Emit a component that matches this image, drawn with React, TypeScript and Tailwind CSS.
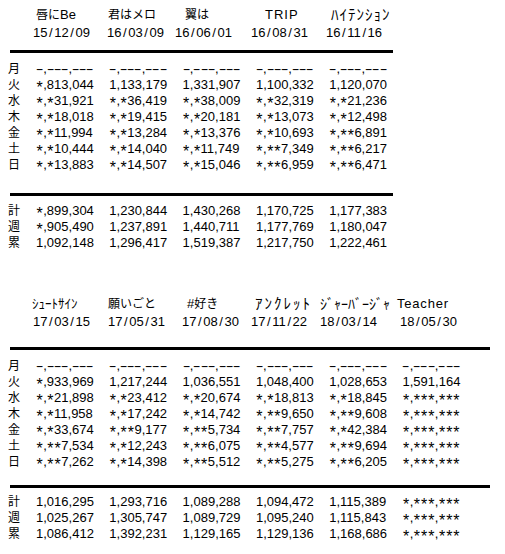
import React from 'react';

type Row = [string, string[]];

const rows1: Row[] = [
  ['月', ['-,---,---', '-,---,---', '-,---,---', '-,---,---', '-,---,---']],
  ['火', ['*,813,044', '1,133,179', '1,331,907', '1,100,332', '1,120,070']],
  ['水', ['*,*31,921', '*,*36,419', '*,*38,009', '*,*32,319', '*,*21,236']],
  ['木', ['*,*18,018', '*,*19,415', '*,*20,181', '*,*13,073', '*,*12,498']],
  ['金', ['*,*11,994', '*,*13,284', '*,*13,376', '*,*10,693', '*,**6,891']],
  ['土', ['*,*10,444', '*,*14,040', '*,*11,749', '*,**7,349', '*,**6,217']],
  ['日', ['*,*13,883', '*,*14,507', '*,*15,046', '*,**6,959', '*,**6,471']],
];
const tot1: Row[] = [
  ['計', ['*,899,304', '1,230,844', '1,430,268', '1,170,725', '1,177,383']],
  ['週', ['*,905,490', '1,237,891', '1,440,711', '1,177,769', '1,180,047']],
  ['累', ['1,092,148', '1,296,417', '1,519,387', '1,217,750', '1,222,461']],
];
const rows2: Row[] = [
  ['月', ['-,---,---', '-,---,---', '-,---,---', '-,---,---', '-,---,---', '-,---,---']],
  ['火', ['*,933,969', '1,217,244', '1,036,551', '1,048,400', '1,028,653', '1,591,164']],
  ['水', ['*,*21,898', '*,*23,412', '*,*20,674', '*,*18,813', '*,*18,845', '*,***,***']],
  ['木', ['*,*11,958', '*,*17,242', '*,*14,742', '*,**9,650', '*,**9,608', '*,***,***']],
  ['金', ['*,*33,674', '*,**9,177', '*,**5,734', '*,**7,757', '*,*42,384', '*,***,***']],
  ['土', ['*,**7,534', '*,*12,243', '*,**6,075', '*,**4,577', '*,**9,694', '*,***,***']],
  ['日', ['*,**7,262', '*,*14,398', '*,**5,512', '*,**5,275', '*,**6,205', '*,***,***']],
];
const tot2: Row[] = [
  ['計', ['1,016,295', '1,293,716', '1,089,288', '1,094,472', '1,115,389', '*,***,***']],
  ['週', ['1,025,267', '1,305,747', '1,089,729', '1,095,240', '1,115,843', '*,***,***']],
  ['累', ['1,086,412', '1,392,231', '1,129,165', '1,129,136', '1,168,686', '*,***,***']],
];

function Val({ s }: { s: string }) {
  return (
    <span className="whitespace-pre">
      {s.split('').map((c, i) =>
        c === '*' ? (
          <span key={i} className="inline-block w-[7.2px] text-center text-[16px] leading-[10px] [vertical-align:-4px]">*</span>
        ) : c === '-' ? (
          <span key={i} className="inline-block w-[7.2px] text-center scale-x-[1.8]">-</span>
        ) : (
          <span key={i}>{c}</span>
        )
      )}
    </span>
  );
}

function DateText({ s }: { s: string }) {
  const parts = s.split('/');
  return (
    <span className="whitespace-pre">
      {parts.map((p, i) => (
        <React.Fragment key={i}>
          {i > 0 && <span className="mx-[1.6px]">/</span>}
          {p}
        </React.Fragment>
      ))}
    </span>
  );
}

function DataRow({ row }: { row: Row }) {
  return (
    <div className="flex h-[16px]">
      <div className="w-[36px] pl-[8px] text-[12px] leading-[16px]">{row[0]}</div>
      {row[1].map((v, i) => (
        <div key={i} className="w-[73.3px] leading-[16px]">
          <Val s={v} />
        </div>
      ))}
    </div>
  );
}

export default function App() {
  return (
    <div className="w-[505px] h-[554px] overflow-hidden bg-white text-black font-['Liberation_Sans','Noto_Sans_CJK_JP',sans-serif] text-[13px]">
      {/* Table 1 */}
      <div className="flex flex-col">
        <div className="flex mt-[7px] h-[16px] leading-[16px] pl-[36px] text-[12px]">
          <div className="w-[72px]">唇に<span className="text-[13px]">Be</span></div>
          <div className="w-[77px]">君はメロ</div>
          <div className="w-[80px]">翼は</div>
          <div className="w-[66px] text-[13px] tracking-[1px]">TRIP</div>
          <div className="text-[15px] tracking-[1px]">ﾊｲﾃﾝｼｮﾝ</div>
        </div>
        <div className="flex mt-[2px] h-[16px] leading-[16px] pl-[33px]">
          <div className="w-[74px]"><DateText s="15/12/09" /></div>
          <div className="w-[68px]"><DateText s="16/03/09" /></div>
          <div className="w-[76px]"><DateText s="16/06/01" /></div>
          <div className="w-[75px]"><DateText s="16/08/31" /></div>
          <div><DateText s="16/11/16" /></div>
        </div>
        <div className="mt-[9px] ml-[10px] w-[383px] h-[3px] bg-black" />
        <div className="mt-[8px] flex flex-col">
          {rows1.map((r, i) => (
            <DataRow key={i} row={r} />
          ))}
        </div>
        <div className="mt-[20px] ml-[10px] w-[383px] h-[3px] bg-black" />
        <div className="mt-[7px] flex flex-col">
          {tot1.map((r, i) => (
            <DataRow key={i} row={r} />
          ))}
        </div>
      </div>

      {/* Table 2 */}
      <div className="flex flex-col">
        <div className="flex mt-[45px] h-[16px] leading-[16px] pl-[32px] text-[12px]">
          <div className="w-[76px] text-[13px]">ｼｭｰﾄｻｲﾝ</div>
          <div className="w-[79px]">願いごと</div>
          <div className="w-[68px]"><span className="text-[13px]">#</span>好き</div>
          <div className="w-[65px] text-[15px] tracking-[2px]">ｱﾝｸﾚｯﾄ</div>
          <div className="w-[77px] text-[14px]">ｼﾞｬｰﾊﾞｰｼﾞｬ</div>
          <div className="text-[13px] tracking-[0.8px]">Teacher</div>
        </div>
        <div className="flex mt-[2px] h-[16px] leading-[16px] pl-[33px]">
          <div className="w-[75px]"><DateText s="17/03/15" /></div>
          <div className="w-[74px]"><DateText s="17/05/31" /></div>
          <div className="w-[69px]"><DateText s="17/08/30" /></div>
          <div className="w-[69px]"><DateText s="17/11/22" /></div>
          <div className="w-[80px]"><DateText s="18/03/14" /></div>
          <div><DateText s="18/05/30" /></div>
        </div>
        <div className="mt-[17px] ml-[10px] w-[480px] h-[3px] bg-black" />
        <div className="mt-[8px] flex flex-col">
          {rows2.map((r, i) => (
            <DataRow key={i} row={r} />
          ))}
        </div>
        <div className="mt-[15px] ml-[10px] w-[480px] h-[3px] bg-black" />
        <div className="mt-[6px] flex flex-col">
          {tot2.map((r, i) => (
            <DataRow key={i} row={r} />
          ))}
        </div>
      </div>
    </div>
  );
}
